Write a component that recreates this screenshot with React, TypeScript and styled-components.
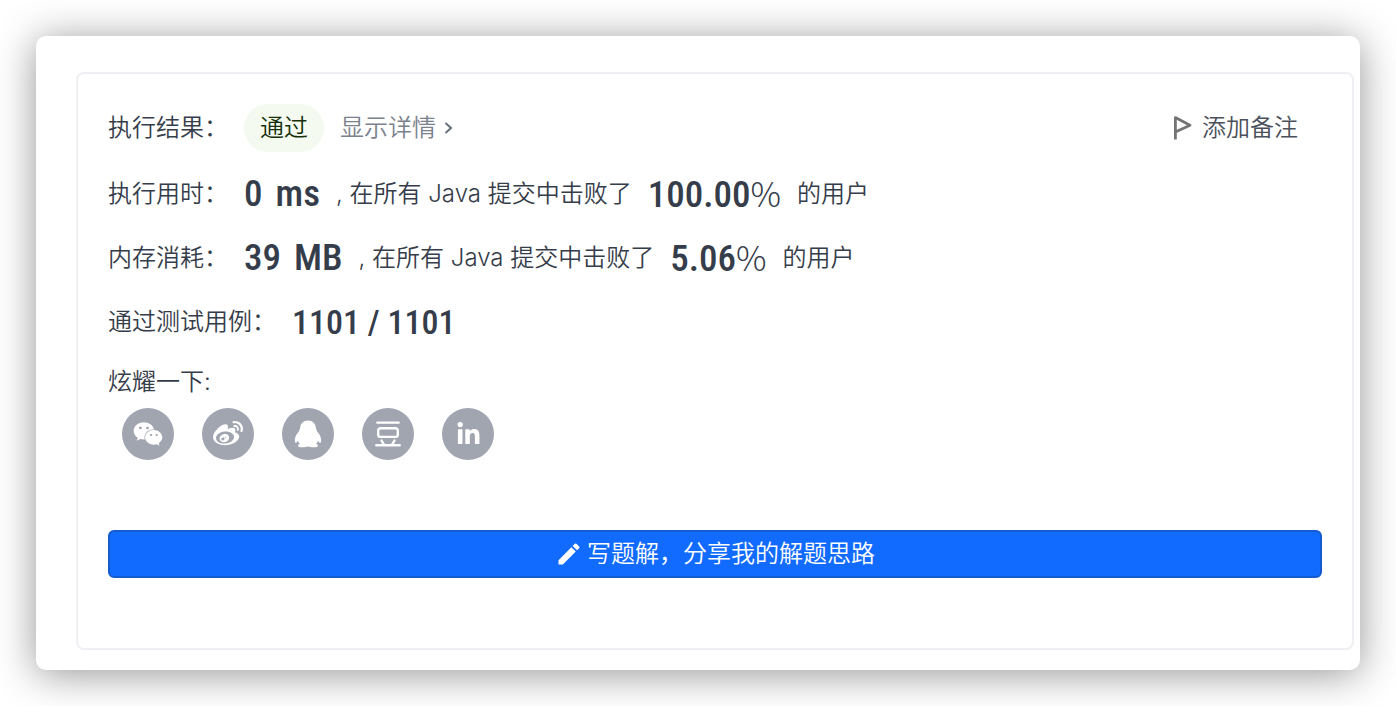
import React from "react";
import styled, { createGlobalStyle } from "styled-components";
import { FaWeibo, FaWeixin, FaLinkedinIn } from "react-icons/fa";
import { MdEdit } from "react-icons/md";

const GlobalStyle = createGlobalStyle`
  * { box-sizing: border-box; }
  body {
    margin: 0;
    background: #fff;
    color: #363d4a;
    font-family: Inter, "Noto Sans CJK SC", sans-serif;
    font-size: 24px;
    font-weight: 350;
    line-height: 36px;
  }
  button { font: inherit; cursor: pointer; }
`;

const Page = styled.main`
  padding: 36px;
`;

const Window = styled.div`
  padding: 36px 6px 20px 40px;
  border-radius: 10px;
  background: #fff;
  box-shadow: 0 4px 40px rgba(0, 0, 0, 0.42);
`;

const Card = styled.section`
  padding: 30px 30px 70px;
  border: 2px solid #efeff4;
  border-radius: 8px;
`;

const Header = styled.header`
  display: flex;
  align-items: center;
  gap: 16px;
  padding-right: 24px;
`;

const Status = styled.span`
  padding: 6px 16px;
  border-radius: 24px;
  background: #f4faf0;
  color: #16300a;
`;

const Details = styled.a`
  display: flex;
  align-items: center;
  gap: 8px;
  color: #7b818d;
  text-decoration: none;
`;

const NoteButton = styled.button`
  display: flex;
  align-items: center;
  gap: 10px;
  margin-left: auto;
  padding: 0;
  border: 0;
  background: none;
  color: #4a505c;
`;

const Stats = styled.div`
  display: grid;
  gap: 16px;
  padding: 18px 0;
`;

const StatRow = styled.div`
  display: flex;
  align-items: center;
  gap: 16px;
  height: 48px;
`;

const Value = styled.strong<{ $compact?: boolean }>`
  display: flex;
  align-items: baseline;
  font-family: "Roboto Condensed", Roboto, sans-serif;
  font-size: ${({ $compact }) => ($compact ? 34 : 37)}px;
  font-weight: 500;
`;

const Unit = styled.span`
  margin-left: 13px;
`;

const Percent = styled.span`
  font-family: "Noto Sans CJK SC", sans-serif;
  font-size: 34px;
  font-weight: 300;
`;

const ShareList = styled.ul`
  display: flex;
  gap: 28px;
  margin: 8px 0 70px;
  padding: 0 14px;
  list-style: none;
`;

const ShareButton = styled.button`
  display: flex;
  align-items: center;
  justify-content: center;
  width: 52px;
  height: 52px;
  padding: 0;
  border: 0;
  border-radius: 50%;
  background: #a1a5b0;
  color: #fff;
`;

const WriteButton = styled.button`
  display: flex;
  align-items: center;
  justify-content: center;
  gap: 4px;
  width: 100%;
  height: 48px;
  padding: 0;
  border: 2px solid #155bd0;
  border-radius: 6px;
  background: #126bff;
  color: #fff;
`;

const FlagIcon = () => (
  <svg width="20" height="26" viewBox="0 0 20 26" fill="none" stroke="#757575" strokeWidth="2.8" strokeLinejoin="round" aria-hidden="true">
    <path d="M3.4 24.5V2.6L18 10.3L3.4 17" />
  </svg>
);

const ChevronIcon = () => (
  <svg width="9" height="14" viewBox="0 0 9 14" fill="none" stroke="#686f7c" strokeWidth="2" aria-hidden="true">
    <path d="M1.5 2L7 7L1.5 12" />
  </svg>
);

const QqIcon = () => (
  <svg width="28" height="28" viewBox="0 0 28 28" fill="#fff" aria-hidden="true">
    <path d="M14 .6C9.3.6 6.3 3.8 6.1 8.3C5.8 9.4 5.2 10.2 4.9 11.6C2.5 14 .9 17.2.8 20C.8 22.1 1.4 22.9 2.1 22.8C2.9 22.5 3.4 21.4 3.9 20.7C4.3 21.9 4.9 22.9 5.8 23.8C4.7 24.3 4 25 4 25.7C4 26.9 5.7 27.3 8 27.3C10.8 27.3 12.4 26.9 14 26.6C15.6 26.9 17.2 27.3 20 27.3C22.3 27.3 24 26.9 24 25.7C24 25 23.3 24.3 22.2 23.8C23.1 22.9 23.7 21.9 24.1 20.7C24.6 21.4 25.1 22.5 25.9 22.8C26.6 22.9 27.2 22.1 27.2 20C27.1 17.2 25.5 14 23.1 11.6C22.8 10.2 22.2 9.4 21.9 8.3C21.7 3.8 18.7.6 14 .6Z" />
  </svg>
);

const DoubanIcon = () => (
  <svg width="28" height="28" viewBox="0 0 28 28" fill="none" stroke="#fff" strokeWidth="2.4" strokeLinecap="round" aria-hidden="true">
    <path d="M3.3 2.6H24.7M2.3 25.3H25.7M7.5 20.5L9.6 24.2M20.5 20.5L18.4 24.2" />
    <rect x="4.2" y="8.3" width="19.6" height="8.6" rx="2.5" />
  </svg>
);

const shares = [
  { name: "微信", icon: <FaWeixin size={30} /> },
  { name: "微博", icon: <FaWeibo size={30} /> },
  { name: "QQ", icon: <QqIcon /> },
  { name: "豆瓣", icon: <DoubanIcon /> },
  { name: "LinkedIn", icon: <FaLinkedinIn size={25} /> },
];

type StatProps = { label: string; value: string; unit: string; beaten: string };

const Stat = ({ label, value, unit, beaten }: StatProps) => (
  <StatRow>
    <span>{label}</span>
    <Value>
      {value}
      <Unit>{unit}</Unit>
    </Value>
    <span>, 在所有 Java 提交中击败了</span>
    <Value>
      {beaten}
      <Percent>%</Percent>
    </Value>
    <span>的用户</span>
  </StatRow>
);

export default function App() {
  return (
    <Page>
      <GlobalStyle />
      <Window>
        <Card>
          <Header>
            <span>执行结果：</span>
            <Status>通过</Status>
            <Details href="#details">
              显示详情
              <ChevronIcon />
            </Details>
            <NoteButton type="button">
              <FlagIcon />
              添加备注
            </NoteButton>
          </Header>
          <Stats>
            <Stat label="执行用时：" value="0" unit="ms" beaten="100.00" />
            <Stat label="内存消耗：" value="39" unit="MB" beaten="5.06" />
            <StatRow>
              <span>通过测试用例：</span>
              <Value $compact>1101 / 1101</Value>
            </StatRow>
          </Stats>
          <div>炫耀一下:</div>
          <ShareList>
            {shares.map(({ name, icon }) => (
              <li key={name}>
                <ShareButton type="button" aria-label={name}>
                  {icon}
                </ShareButton>
              </li>
            ))}
          </ShareList>
          <WriteButton type="button">
            <MdEdit size={28} />
            写题解，分享我的解题思路
          </WriteButton>
        </Card>
      </Window>
    </Page>
  );
}
